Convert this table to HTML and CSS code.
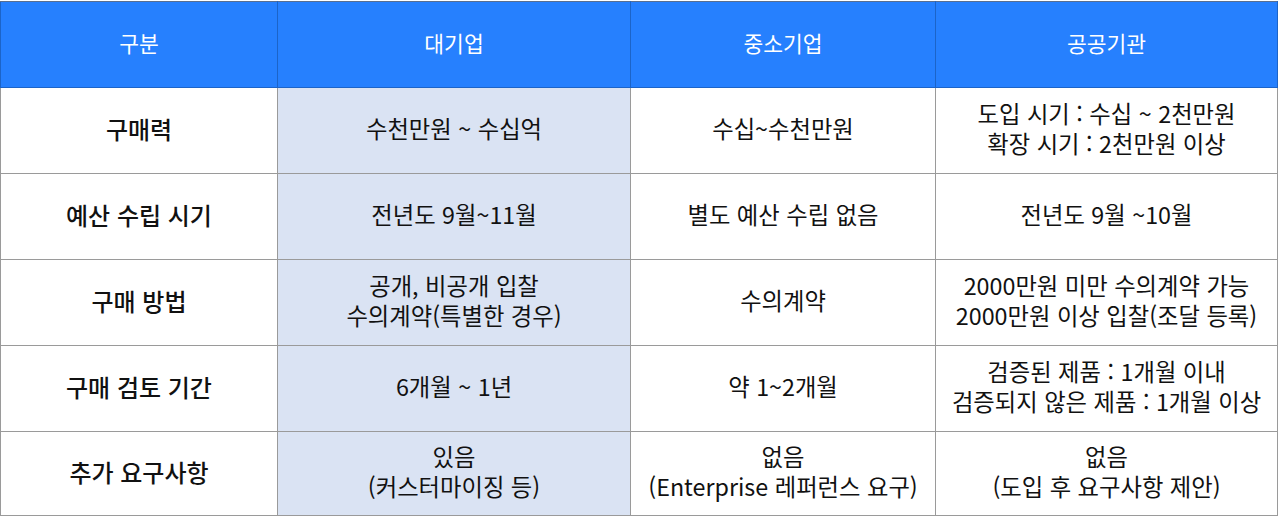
FILE: index.html
```html
<!DOCTYPE html>
<html lang="ko">
<head>
<meta charset="utf-8">
<link rel="stylesheet" href="styles.css">
</head>
<body>
<table class="grid">
  <colgroup>
    <col class="c1"><col class="c2"><col class="c3"><col class="c4">
  </colgroup>
  <thead>
    <tr><th>구분</th><th>대기업</th><th>중소기업</th><th>공공기관</th></tr>
  </thead>
  <tbody>
    <tr><td class="label">구매력</td><td class="hl">수천만원 ~ 수십억</td><td>수십~수천만원</td><td>도입 시기 : 수십 ~ 2천만원<br>확장 시기 : 2천만원 이상</td></tr>
    <tr><td class="label">예산 수립 시기</td><td class="hl">전년도 9월~11월</td><td>별도 예산 수립 없음</td><td>전년도 9월 ~10월</td></tr>
    <tr><td class="label">구매 방법</td><td class="hl">공개, 비공개 입찰<br>수의계약(특별한 경우)</td><td>수의계약</td><td>2000만원 미만 수의계약 가능<br>2000만원 이상 입찰(조달 등록)</td></tr>
    <tr><td class="label">구매 검토 기간</td><td class="hl">6개월 ~ 1년</td><td>약 1~2개월</td><td>검증된 제품 : 1개월 이내<br>검증되지 않은 제품 : 1개월 이상</td></tr>
    <tr class="last"><td class="label">추가 요구사항</td><td class="hl">있음<br>(커스터마이징 등)</td><td>없음<br>(Enterprise 레퍼런스 요구)</td><td>없음<br>(도입 후 요구사항 제안)</td></tr>
  </tbody>
</table>
</body>
</html>
```

FILE: styles.css
```css
html, body {
  margin: 0;
  padding: 0;
  background: #ffffff;
}
body {
  padding-top: 1px;
  font-family: "Noto Sans CJK KR", "Noto Sans", sans-serif;
  color: #111111;
}
.grid {
  border-collapse: collapse;
  width: 1277px;
  table-layout: fixed;
  font-size: 23.3px;
  line-height: 29.5px;
}
.c1 { width: 277px; }
.c2 { width: 353px; }
.c3 { width: 305px; }
.c4 { width: 342px; }
.grid th, .grid td {
  border: 1px solid #9a9a9a;
  text-align: center;
  vertical-align: middle;
  padding: 0 2px 4px;
  white-space: nowrap;
  box-sizing: border-box;
}
.grid th {
  background: #2680fe;
  color: #ffffff;
  font-weight: 400;
  font-size: 21.5px;
  height: 86px;
  border-color: #1c64c8;
  border-top-color: #5a6f8f;
}
.grid td {
  height: 86px;
}
.grid tr.last td {
  height: 84px;
}
.grid td.label {
  font-weight: 500;
  font-size: 24px;
}
.grid td.hl {
  background: #dae3f3;
}
```
